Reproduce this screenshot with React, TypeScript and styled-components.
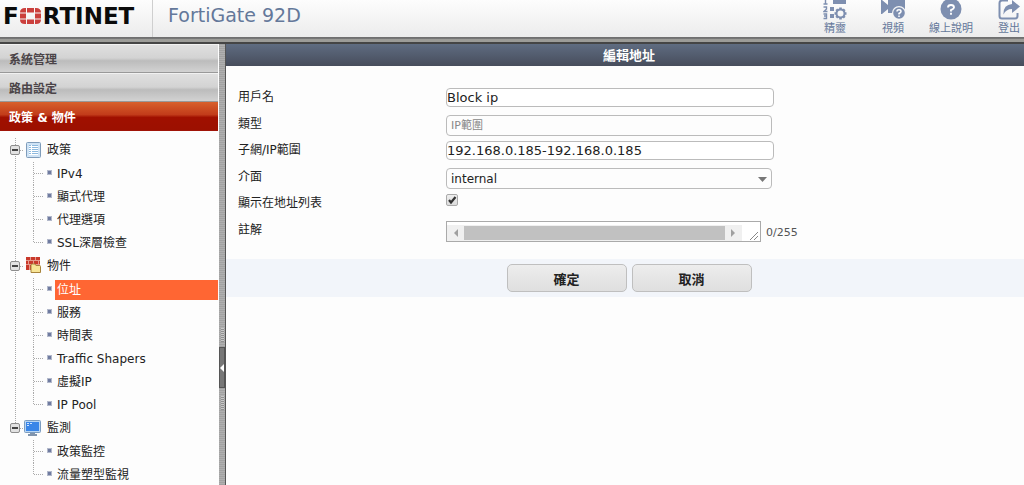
import React from 'react';
import styled, { createGlobalStyle, css } from 'styled-components';

const sans = '"DejaVu Sans", "Noto Sans CJK TC", sans-serif';

const GlobalStyle = createGlobalStyle`
  * { box-sizing: border-box; }
  body { margin: 0; font: 12px/16px ${sans}; color: #222; background: #fdfdfd; }
  input, select, textarea, button { font-family: inherit; color: inherit; margin: 0; }
  ul { list-style: none; margin: 0; padding: 0; }
  a { color: inherit; text-decoration: none; }
`;

const Page = styled.div`
  display: flex;
  flex-direction: column;
  height: 100vh;
  overflow: hidden;
`;

const Header = styled.header`
  display: flex;
  flex: none;
  height: 44px;
  overflow: hidden;
  background: linear-gradient(#fdfdfd, #ececec 37px, #6d6d6d 37px, #7a7a7a 39px, #9c9c98 39px, #9c9c98 42px, #454545 42px);
`;

const Brand = styled.a`
  display: flex;
  align-items: center;
  width: 153px;
  height: 37px;
  padding: 0 0 5px 3px;
  border-right: 1px solid #cfcfcf;
  font-size: 23px;
  line-height: 24px;
  font-weight: bold;
  color: #0b0b0b;
`;

const Product = styled.h1`
  flex: 1;
  margin: 0;
  padding: 3px 15px;
  font-size: 19px;
  line-height: 24px;
  font-weight: normal;
  color: #64789a;
`;

const Tools = styled.nav`
  display: flex;
  margin-right: -14px;
`;

const Tool = styled.a`
  display: flex;
  flex-direction: column;
  align-items: center;
  gap: 1px;
  width: 58px;
  font-size: 11px;
  line-height: 14px;
  color: #64789a;
`;

const Body = styled.div`
  display: flex;
  flex: 1;
  min-height: 0;
`;

const Sidebar = styled.aside`
  flex: none;
  width: 219px;
  padding-right: 1px;
  overflow-y: auto;
  scrollbar-width: none;
  background: #fdfdfd;
`;

const Section = styled.button<{ $active?: boolean }>`
  display: block;
  width: 100%;
  height: 29px;
  padding: 4px 9px 0;
  border: 0;
  border-bottom: 1px solid #999;
  box-shadow: inset 0 1px #f1f1f1;
  text-align: left;
  font-size: 12px;
  line-height: 16px;
  font-weight: bold;
  color: #4b4448;
  background: linear-gradient(#e0e0e0, #d3d3d3 50%, #bcbcbc 60%, #d2d2d2);
  ${p => p.$active && css`
    border-bottom-color: #a01408;
    box-shadow: none;
    color: #fff;
    background: linear-gradient(#d8602c, #c23c1a 45%, #a01000 55%, #9c1000);
  `}
`;

const Tree = styled.ul`
  padding-top: 7px;
`;

const GroupItem = styled.li`
  background: repeating-linear-gradient(#aaa 0 1px, transparent 1px 2px) 15px 0 / 1px 100% no-repeat;
  &:last-child { background-size: 1px 12px; }
`;

const GroupRow = styled.div`
  display: flex;
  align-items: center;
  height: 24px;
  padding-left: 10px;
`;

const Toggle = styled.button`
  width: 10px;
  height: 10px;
  padding: 0;
  border: 1px solid #8d8d8d;
  border-radius: 2px;
  background: linear-gradient(#444, #444) center / 6px 2px no-repeat, #e2e2e2;
`;

const Stub = styled.span<{ $wide?: boolean }>`
  width: ${p => (p.$wide ? 9 : 4)}px;
  height: 1px;
  background: repeating-linear-gradient(90deg, #aaa 0 1px, transparent 1px 2px);
`;

const GroupName = styled.span`
  padding-left: 6px;
`;

const Leaf = styled.li`
  display: flex;
  align-items: center;
  height: 23px;
  padding-left: 34px;
  background: repeating-linear-gradient(#aaa 0 1px, transparent 1px 2px) 33px 0 / 1px 100% no-repeat;
  &:last-child { background-size: 1px 12px; }
`;

const Bullet = styled.span`
  width: 5px;
  height: 5px;
  margin: 0 3px 2px 4px;
  border: 1px solid #b3b9cb;
  background: #6f7ba0;
`;

const LeafLink = styled.a<{ $current?: boolean }>`
  flex: 1;
  padding: 2px;
  ${p => p.$current && css`
    color: #fff;
    background: #ff6633;
  `}
`;

const Splitter = styled.div`
  display: flex;
  flex-direction: column;
  align-items: center;
  flex: none;
  width: 7px;
  padding-top: 284px;
  border-right: 1px solid #555;
  background: repeating-linear-gradient(#a2a2a2 0 1px, #b0b0b0 1px 2px);
`;

const Grip = styled.span`
  width: 3px;
  height: 14px;
  margin: 0 0 5px;
  background: repeating-linear-gradient(#c8c8c8 0 1px, #909090 1px 2px);
  button + & { margin: 8px 0 0; }
`;

const Collapse = styled.button`
  display: flex;
  align-items: center;
  justify-content: center;
  width: 6px;
  height: 41px;
  padding: 0;
  border: 0;
  outline: 1px solid #555;
  outline-offset: -1px;
  background: #777;
`;

const Main = styled.main`
  flex: 1;
  min-width: 0;
  background: #fdfdfd;
`;

const Title = styled.h2`
  margin: 0;
  padding: 3px 0 1px 8px;
  text-align: center;
  font-size: 13px;
  line-height: 18px;
  color: #fff;
  background: linear-gradient(#5f6c81, #474d5c);
`;

const Fields = styled.div`
  padding: 18px 12px 16px;
`;

const Row = styled.div`
  display: grid;
  grid-template-columns: 208px 1fr;
  align-items: start;
  height: 27px;
  &:nth-child(even) { height: 26px; }
`;

const Label = styled.label`
  line-height: 26px;
`;

const Field = styled.div`
  display: flex;
  align-items: center;
  padding-top: 4px;
`;

const TextBox = styled.input`
  width: 328px;
  height: 19px;
  padding: 0;
  border: 1px solid #bbb;
  border-radius: 4px;
  font-size: 13px;
  background: #fff;
`;

const Select = styled.select`
  appearance: none;
  width: 326px;
  height: 21px;
  padding: 0 4px;
  border: 1px solid #bbb;
  border-radius: 4px;
  font-size: 12px;
  background: #fdfdfd;
  &:disabled { color: #888; opacity: 1; font-size: 11px; }
`;

const SelectWrap = styled.div`
  display: grid;
  align-items: center;
  justify-items: end;
  > * { grid-area: 1 / 1; }
  > svg { margin: 2px 5px 0 0; pointer-events: none; }
`;

const Check = styled.input`
  appearance: none;
  width: 12px;
  height: 12px;
  border: 1px solid #aaa;
  border-radius: 2px;
  background: linear-gradient(#eee, #dcdcdc);
`;

const CheckWrap = styled.div`
  display: grid;
  > * { grid-area: 1 / 1; }
  > svg { pointer-events: none; }
`;

const NoteBox = styled.div`
  width: 315px;
  height: 21px;
  border: 1px solid #aaa;
  background: #fff;
`;

const Note = styled.textarea`
  display: block;
  width: 100%;
  height: 3px;
  padding: 0;
  border: 0;
  outline: 0;
  resize: none;
  overflow: hidden;
  background: transparent;
`;

const ScrollBar = styled.div`
  display: flex;
  align-items: center;
  height: 16px;
  background: linear-gradient(90deg, #f0f0f0 calc(100% - 18px), #fff 0);
`;

const Thumb = styled.span`
  flex: 1;
  height: 14px;
  background: #c1c1c1;
`;

const Counter = styled.span`
  padding: 2px 0 0 5px;
  font-size: 11px;
  color: #555;
`;

const Actions = styled.div`
  display: flex;
  justify-content: center;
  gap: 5px;
  padding: 5px 0 5px 8px;
  background: #f2f5fa;
`;

const Action = styled.button`
  width: 120px;
  height: 28px;
  padding: 0;
  border: 1px solid #bfbfbf;
  border-radius: 5px;
  font-size: 13px;
  font-weight: bold;
  background: linear-gradient(#ededed, #dfdfdf);
`;

const LogoMark = () => (
  <svg width="24" height="16" viewBox="0 0 24 16" fill="#cb3f3c" aria-hidden="true">
    <path d="M1 4.500Q1 0 6 0H7V4.500ZM8 0H15V4.500H8ZM16 0H17Q22 0 22 4.500H16ZM1 5.500H7V10.500H1ZM16 5.500H22V10.500H16ZM1 11.500H7V16H6Q1 16 1 11.500ZM8 11.500H15V16H8ZM16 11.500H22Q22 16 17 16H16Z" />
  </svg>
);

const WizardIcon = () => (
  <svg width="24" height="21" viewBox="0 0 24 21" fill="#7e8fb0" aria-hidden="true">
    <path d="M10 0H23V4H10ZM7 7H11V11H7ZM7 14H11V18H7Z" />
    <path d="M2.500 0V4M0.500 4H4.500M0.500 7H3.500V9L1 11.500H4.500M0.500 14H3.500V18.500H0.500M1 16H3.500" fill="none" stroke="#7e8fb0" strokeWidth="1.400" />
    <circle cx="17.500" cy="13.500" r="4" fill="none" stroke="#7e8fb0" strokeWidth="2" />
    <path d="M17.500 7.500V9.500M17.500 17.500V19.500M11.500 13.500H13.500M21.500 13.500H23.500M13.300 9.300L14.700 10.700M20.300 16.300L21.700 17.700M21.700 9.300L20.300 10.700M14.700 16.300L13.300 17.700" stroke="#7e8fb0" strokeWidth="2.600" />
  </svg>
);

const VideoIcon = () => (
  <svg width="26" height="21" viewBox="0 0 26 21" fill="#7e8fb0" aria-hidden="true">
    <path d="M1 0H2L8 5V0H25V13H8V9L2 14H1Z" />
    <circle cx="19" cy="13" r="7" fill="#f6f6f6" />
    <circle cx="19" cy="13" r="5.800" />
    <path d="M17 11.500Q17 9.800 19 9.800T21 11.500Q21 12.500 19 13.500V14.500M19 15.500V17" fill="none" stroke="#fff" strokeWidth="1.500" />
  </svg>
);

const HelpIcon = () => (
  <svg width="22" height="21" viewBox="0 0 22 21" aria-hidden="true">
    <circle cx="11" cy="9" r="10.500" fill="#7e8fb0" />
    <path d="M8 7.500Q8 5 11 5T14 7.500Q14 8.700 11 10.200V11.500M11 12.800V14.800" fill="none" stroke="#fff" strokeWidth="1.900" />
  </svg>
);

const LogoutIcon = () => (
  <svg width="24" height="21" viewBox="0 0 24 21" aria-hidden="true">
    <path d="M11 0.500H5Q2.500 0.500 2.500 3V16Q2.500 18.500 5 18.500H18Q20.500 18.500 20.500 16V13" fill="none" stroke="#7e8fb0" strokeWidth="2" />
    <path d="M15 0L23 6.500L15 13V9Q9 9 6.500 14.500Q6 5 15 4Z" fill="#7e8fb0" />
  </svg>
);

const PolicyIcon = () => (
  <svg width="17" height="18" viewBox="0 0 17 18" aria-hidden="true">
    <rect x="2.500" y="1.500" width="14" height="15" rx="1" fill="#cfe3f5" stroke="#7f9cba" />
    <rect x="5" y="4" width="9" height="10" fill="#fff" />
    <path d="M5 4.500H7M8 4.500H14M5 6.500H7M8 6.500H14M5 8.500H7M8 8.500H14M5 10.500H7M8 10.500H14M5 12.500H7M8 12.500H14" stroke="#8db9de" />
  </svg>
);

const ObjectIcon = () => (
  <svg width="17" height="18" viewBox="0 0 17 18" aria-hidden="true">
    <rect x="2" y="0" width="14" height="13" fill="#c9392b" />
    <path d="M2 3.500H16M2 7.500H16M6.500 0V3M11.500 0V3M4.500 4V7M9.500 4V7M14.500 4V7M5.500 8V13" stroke="#e59a8e" />
    <path d="M7 8.500Q7 7 8.500 7H11L12 8.500H15.500Q16.500 8.500 16.500 9.500V15.500H7Z" fill="#f8e596" stroke="#a8843c" />
  </svg>
);

const MonitorIcon = () => (
  <svg width="17" height="18" viewBox="0 0 17 18" aria-hidden="true">
    <rect x="0.500" y="1.500" width="16" height="12" rx="1" fill="#b9d6f3" stroke="#7c9dc0" />
    <rect x="2" y="3" width="13" height="9" fill="#3a86e8" />
    <path d="M3 4.500H5M6 4.500H8M3 6.500H5" stroke="#cfe4ff" />
    <path d="M6 14H11V15H13V17H4V15H6Z" fill="#8195ad" />
  </svg>
);

const tools = [
  { name: '精靈', Icon: WizardIcon },
  { name: '視頻', Icon: VideoIcon },
  { name: '線上說明', Icon: HelpIcon },
  { name: '登出', Icon: LogoutIcon },
];

const groups = [
  { name: '政策', Icon: PolicyIcon, items: ['IPv4', '顯式代理', '代理選項', 'SSL深層檢查'] },
  { name: '物件', Icon: ObjectIcon, items: ['位址', '服務', '時間表', 'Traffic Shapers', '虛擬IP', 'IP Pool'] },
  { name: '監測', Icon: MonitorIcon, items: ['政策監控', '流量塑型監視'] },
];

const DropArrow = () => (
  <svg width="9" height="5" viewBox="0 0 9 5" aria-hidden="true">
    <path d="M0 0H9L4.500 5Z" fill="#777" />
  </svg>
);

export default function App() {
  return (
    <Page>
      <GlobalStyle />
      <Header>
        <Brand href="#" aria-label="Fortinet">F<LogoMark />RTINET</Brand>
        <Product>FortiGate 92D</Product>
        <Tools>
          {tools.map(({ name, Icon }) => (
            <Tool href="#" key={name}><Icon />{name}</Tool>
          ))}
        </Tools>
      </Header>
      <Body>
        <Sidebar>
          <Section type="button">系統管理</Section>
          <Section type="button">路由設定</Section>
          <Section type="button" $active>政策 &amp; 物件</Section>
          <Tree>
            {groups.map(({ name, Icon, items }) => (
              <GroupItem key={name}>
                <GroupRow>
                  <Toggle type="button" aria-label={name} />
                  <Stub />
                  <Icon />
                  <GroupName>{name}</GroupName>
                </GroupRow>
                <ul>
                  {items.map(item => (
                    <Leaf key={item}>
                      <Stub $wide />
                      <Bullet />
                      <LeafLink href="#" $current={item === '位址'}>{item}</LeafLink>
                    </Leaf>
                  ))}
                </ul>
              </GroupItem>
            ))}
          </Tree>
        </Sidebar>
        <Splitter>
          <Grip />
          <Collapse type="button" aria-label="Collapse">
            <svg width="4" height="8" viewBox="0 0 4 8" aria-hidden="true"><path d="M4 0V8L0 4Z" fill="#fff" /></svg>
          </Collapse>
          <Grip />
        </Splitter>
        <Main>
          <Title>編輯地址</Title>
          <form onSubmit={e => e.preventDefault()}>
            <Fields>
              <Row>
                <Label htmlFor="name">用戶名</Label>
                <Field><TextBox id="name" defaultValue="Block ip" /></Field>
              </Row>
              <Row>
                <Label htmlFor="type">類型</Label>
                <Field><Select id="type" disabled><option>IP範圍</option></Select></Field>
              </Row>
              <Row>
                <Label htmlFor="range">子網/IP範圍</Label>
                <Field><TextBox id="range" defaultValue="192.168.0.185-192.168.0.185" /></Field>
              </Row>
              <Row>
                <Label htmlFor="iface">介面</Label>
                <Field>
                  <SelectWrap>
                    <Select id="iface"><option>internal</option></Select>
                    <DropArrow />
                  </SelectWrap>
                </Field>
              </Row>
              <Row>
                <Label htmlFor="show">顯示在地址列表</Label>
                <Field>
                  <CheckWrap>
                    <Check id="show" type="checkbox" defaultChecked />
                    <svg width="12" height="12" viewBox="0 0 12 12" aria-hidden="true">
                      <path d="M3 6L5 8.500L9.500 3" fill="none" stroke="#333" strokeWidth="2.200" />
                    </svg>
                  </CheckWrap>
                </Field>
              </Row>
              <Row>
                <Label htmlFor="note">註解</Label>
                <Field>
                  <NoteBox>
                    <Note id="note" />
                    <ScrollBar>
                      <svg width="17" height="16" viewBox="0 0 17 16" aria-hidden="true"><path d="M11 4V12L7 8Z" fill="#a0a0a0" /></svg>
                      <Thumb />
                      <svg width="17" height="16" viewBox="0 0 17 16" aria-hidden="true"><path d="M6 4V12L10 8Z" fill="#a0a0a0" /></svg>
                      <svg width="18" height="16" viewBox="0 0 18 16" aria-hidden="true"><path d="M8 15L16 7M12 15L16 11" stroke="#888" /></svg>
                    </ScrollBar>
                  </NoteBox>
                  <Counter>0/255</Counter>
                </Field>
              </Row>
            </Fields>
            <Actions>
              <Action type="submit">確定</Action>
              <Action type="button">取消</Action>
            </Actions>
          </form>
        </Main>
      </Body>
    </Page>
  );
}
